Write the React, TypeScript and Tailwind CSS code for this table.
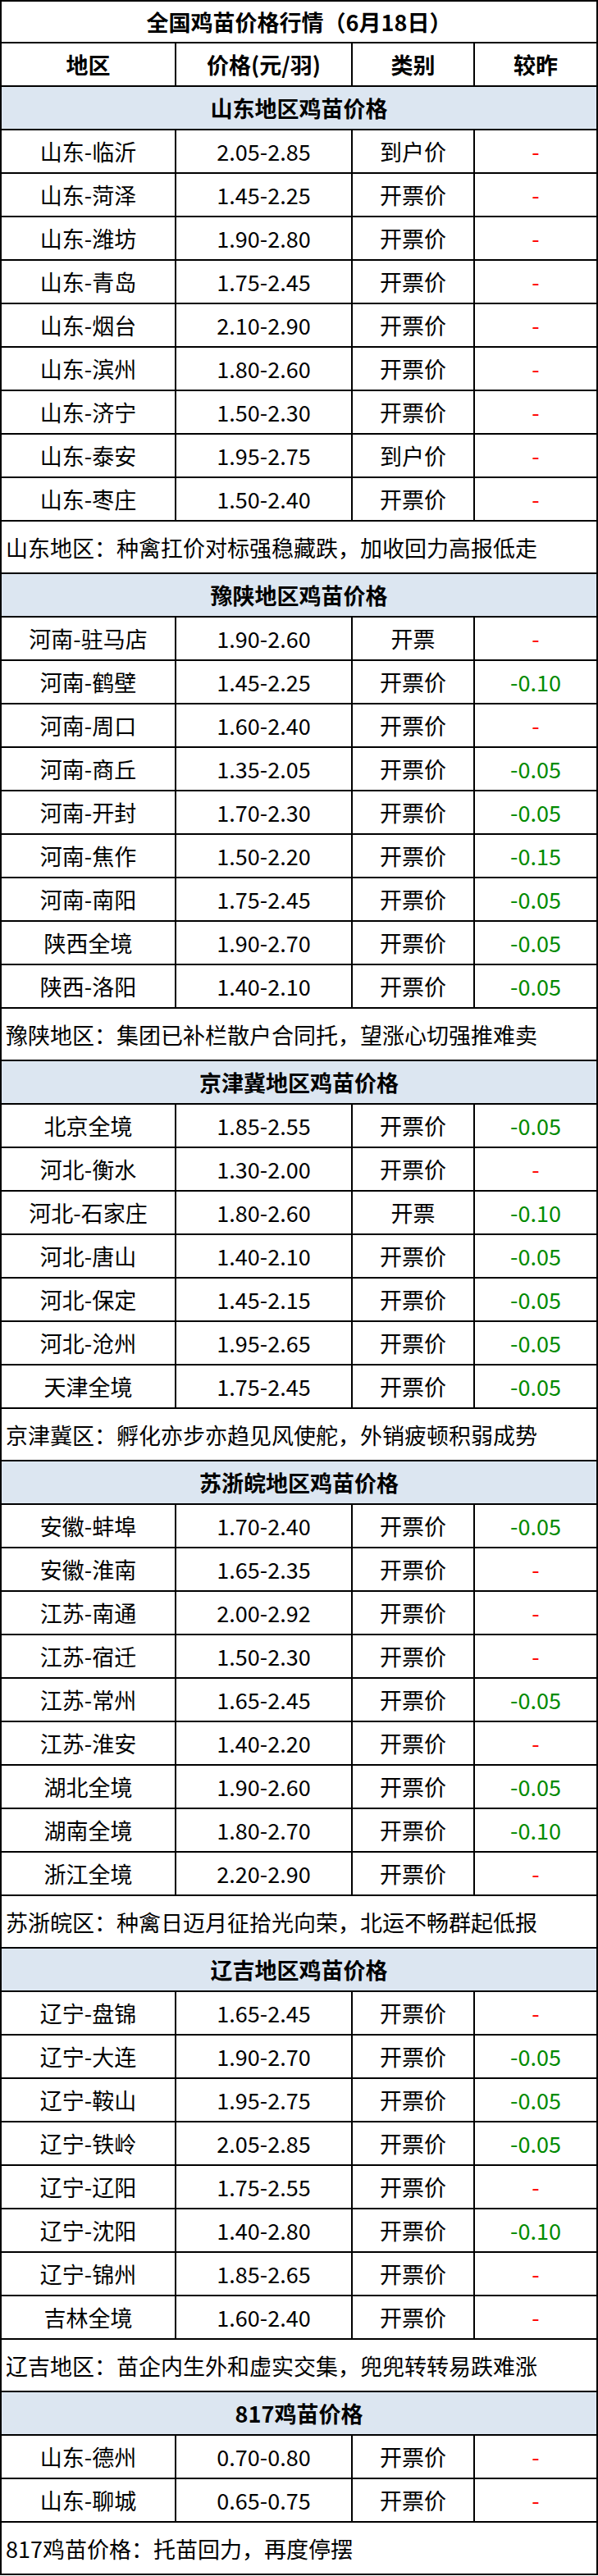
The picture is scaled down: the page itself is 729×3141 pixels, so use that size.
import React from "react";

type Row = [string, string, string, string];
type Section = { title: string; rows: Row[]; note: string };

const sections: Section[] = [
  {
    title: "山东地区鸡苗价格",
    rows: [
      ["山东-临沂", "2.05-2.85", "到户价", "-"],
      ["山东-菏泽", "1.45-2.25", "开票价", "-"],
      ["山东-潍坊", "1.90-2.80", "开票价", "-"],
      ["山东-青岛", "1.75-2.45", "开票价", "-"],
      ["山东-烟台", "2.10-2.90", "开票价", "-"],
      ["山东-滨州", "1.80-2.60", "开票价", "-"],
      ["山东-济宁", "1.50-2.30", "开票价", "-"],
      ["山东-泰安", "1.95-2.75", "到户价", "-"],
      ["山东-枣庄", "1.50-2.40", "开票价", "-"],
    ],
    note: "山东地区：种禽扛价对标强稳藏跌，加收回力高报低走",
  },
  {
    title: "豫陕地区鸡苗价格",
    rows: [
      ["河南-驻马店", "1.90-2.60", "开票", "-"],
      ["河南-鹤壁", "1.45-2.25", "开票价", "-0.10"],
      ["河南-周口", "1.60-2.40", "开票价", "-"],
      ["河南-商丘", "1.35-2.05", "开票价", "-0.05"],
      ["河南-开封", "1.70-2.30", "开票价", "-0.05"],
      ["河南-焦作", "1.50-2.20", "开票价", "-0.15"],
      ["河南-南阳", "1.75-2.45", "开票价", "-0.05"],
      ["陕西全境", "1.90-2.70", "开票价", "-0.05"],
      ["陕西-洛阳", "1.40-2.10", "开票价", "-0.05"],
    ],
    note: "豫陕地区：集团已补栏散户合同托，望涨心切强推难卖",
  },
  {
    title: "京津冀地区鸡苗价格",
    rows: [
      ["北京全境", "1.85-2.55", "开票价", "-0.05"],
      ["河北-衡水", "1.30-2.00", "开票价", "-"],
      ["河北-石家庄", "1.80-2.60", "开票", "-0.10"],
      ["河北-唐山", "1.40-2.10", "开票价", "-0.05"],
      ["河北-保定", "1.45-2.15", "开票价", "-0.05"],
      ["河北-沧州", "1.95-2.65", "开票价", "-0.05"],
      ["天津全境", "1.75-2.45", "开票价", "-0.05"],
    ],
    note: "京津冀区：孵化亦步亦趋见风使舵，外销疲顿积弱成势",
  },
  {
    title: "苏浙皖地区鸡苗价格",
    rows: [
      ["安徽-蚌埠", "1.70-2.40", "开票价", "-0.05"],
      ["安徽-淮南", "1.65-2.35", "开票价", "-"],
      ["江苏-南通", "2.00-2.92", "开票价", "-"],
      ["江苏-宿迁", "1.50-2.30", "开票价", "-"],
      ["江苏-常州", "1.65-2.45", "开票价", "-0.05"],
      ["江苏-淮安", "1.40-2.20", "开票价", "-"],
      ["湖北全境", "1.90-2.60", "开票价", "-0.05"],
      ["湖南全境", "1.80-2.70", "开票价", "-0.10"],
      ["浙江全境", "2.20-2.90", "开票价", "-"],
    ],
    note: "苏浙皖区：种禽日迈月征拾光向荣，北运不畅群起低报",
  },
  {
    title: "辽吉地区鸡苗价格",
    rows: [
      ["辽宁-盘锦", "1.65-2.45", "开票价", "-"],
      ["辽宁-大连", "1.90-2.70", "开票价", "-0.05"],
      ["辽宁-鞍山", "1.95-2.75", "开票价", "-0.05"],
      ["辽宁-铁岭", "2.05-2.85", "开票价", "-0.05"],
      ["辽宁-辽阳", "1.75-2.55", "开票价", "-"],
      ["辽宁-沈阳", "1.40-2.80", "开票价", "-0.10"],
      ["辽宁-锦州", "1.85-2.65", "开票价", "-"],
      ["吉林全境", "1.60-2.40", "开票价", "-"],
    ],
    note: "辽吉地区：苗企内生外和虚实交集，兜兜转转易跌难涨",
  },
  {
    title: "817鸡苗价格",
    rows: [
      ["山东-德州", "0.70-0.80", "开票价", "-"],
      ["山东-聊城", "0.65-0.75", "开票价", "-"],
    ],
    note: "817鸡苗价格：托苗回力，再度停摆",
  },
];

const font = {
  fontFamily: '"Microsoft YaHei", "Noto Sans CJK SC", "Noto Sans", sans-serif',
};

function DataRow({ r }: { r: Row }) {
  const isDash = r[3] === "-";
  return (
    <div className="flex h-[53px] border-b-2 border-black text-[27px] leading-none text-black">
      <div className="flex w-[211px] items-center justify-center">{r[0]}</div>
      <div className="flex w-[215px] items-center justify-center border-l-2 border-black">{r[1]}</div>
      <div className="flex w-[149px] items-center justify-center border-l-2 border-black">{r[2]}</div>
      <div
        className={
          isDash
            ? "flex flex-1 items-center justify-center border-l-2 border-black text-[#ff0000]"
            : "flex flex-1 items-center justify-center border-l-2 border-black text-[#008a00]"
        }
      >
        {r[3]}
      </div>
    </div>
  );
}

export default function App() {
  return (
    <div className="w-[729px] bg-white" style={font}>
      <div className="border-x-2 border-t-2 border-black">
        <div className="flex h-[51px] items-center justify-center border-b-2 border-black text-[27px] font-bold leading-none text-black">
          全国鸡苗价格行情（6月18日）
        </div>
        <div className="flex h-[53px] border-b-2 border-black text-[27px] font-bold leading-none text-black">
          <div className="flex w-[211px] items-center justify-center">地区</div>
          <div className="flex w-[215px] items-center justify-center border-l-2 border-black">价格(元/羽)</div>
          <div className="flex w-[149px] items-center justify-center border-l-2 border-black">类别</div>
          <div className="flex flex-1 items-center justify-center border-l-2 border-black">较昨</div>
        </div>
        {sections.map((s) => (
          <div key={s.title}>
            <div className="flex h-[53px] items-center justify-center border-b-2 border-black bg-[#dce6f1] text-[27px] font-bold leading-none text-black">
              {s.title}
            </div>
            {s.rows.map((r) => (
              <DataRow key={r[0]} r={r} />
            ))}
            <div className="flex h-[64px] items-center border-b-2 border-black pl-[5px] text-[27px] leading-none text-black">
              {s.note}
            </div>
          </div>
        ))}
      </div>
    </div>
  );
}
